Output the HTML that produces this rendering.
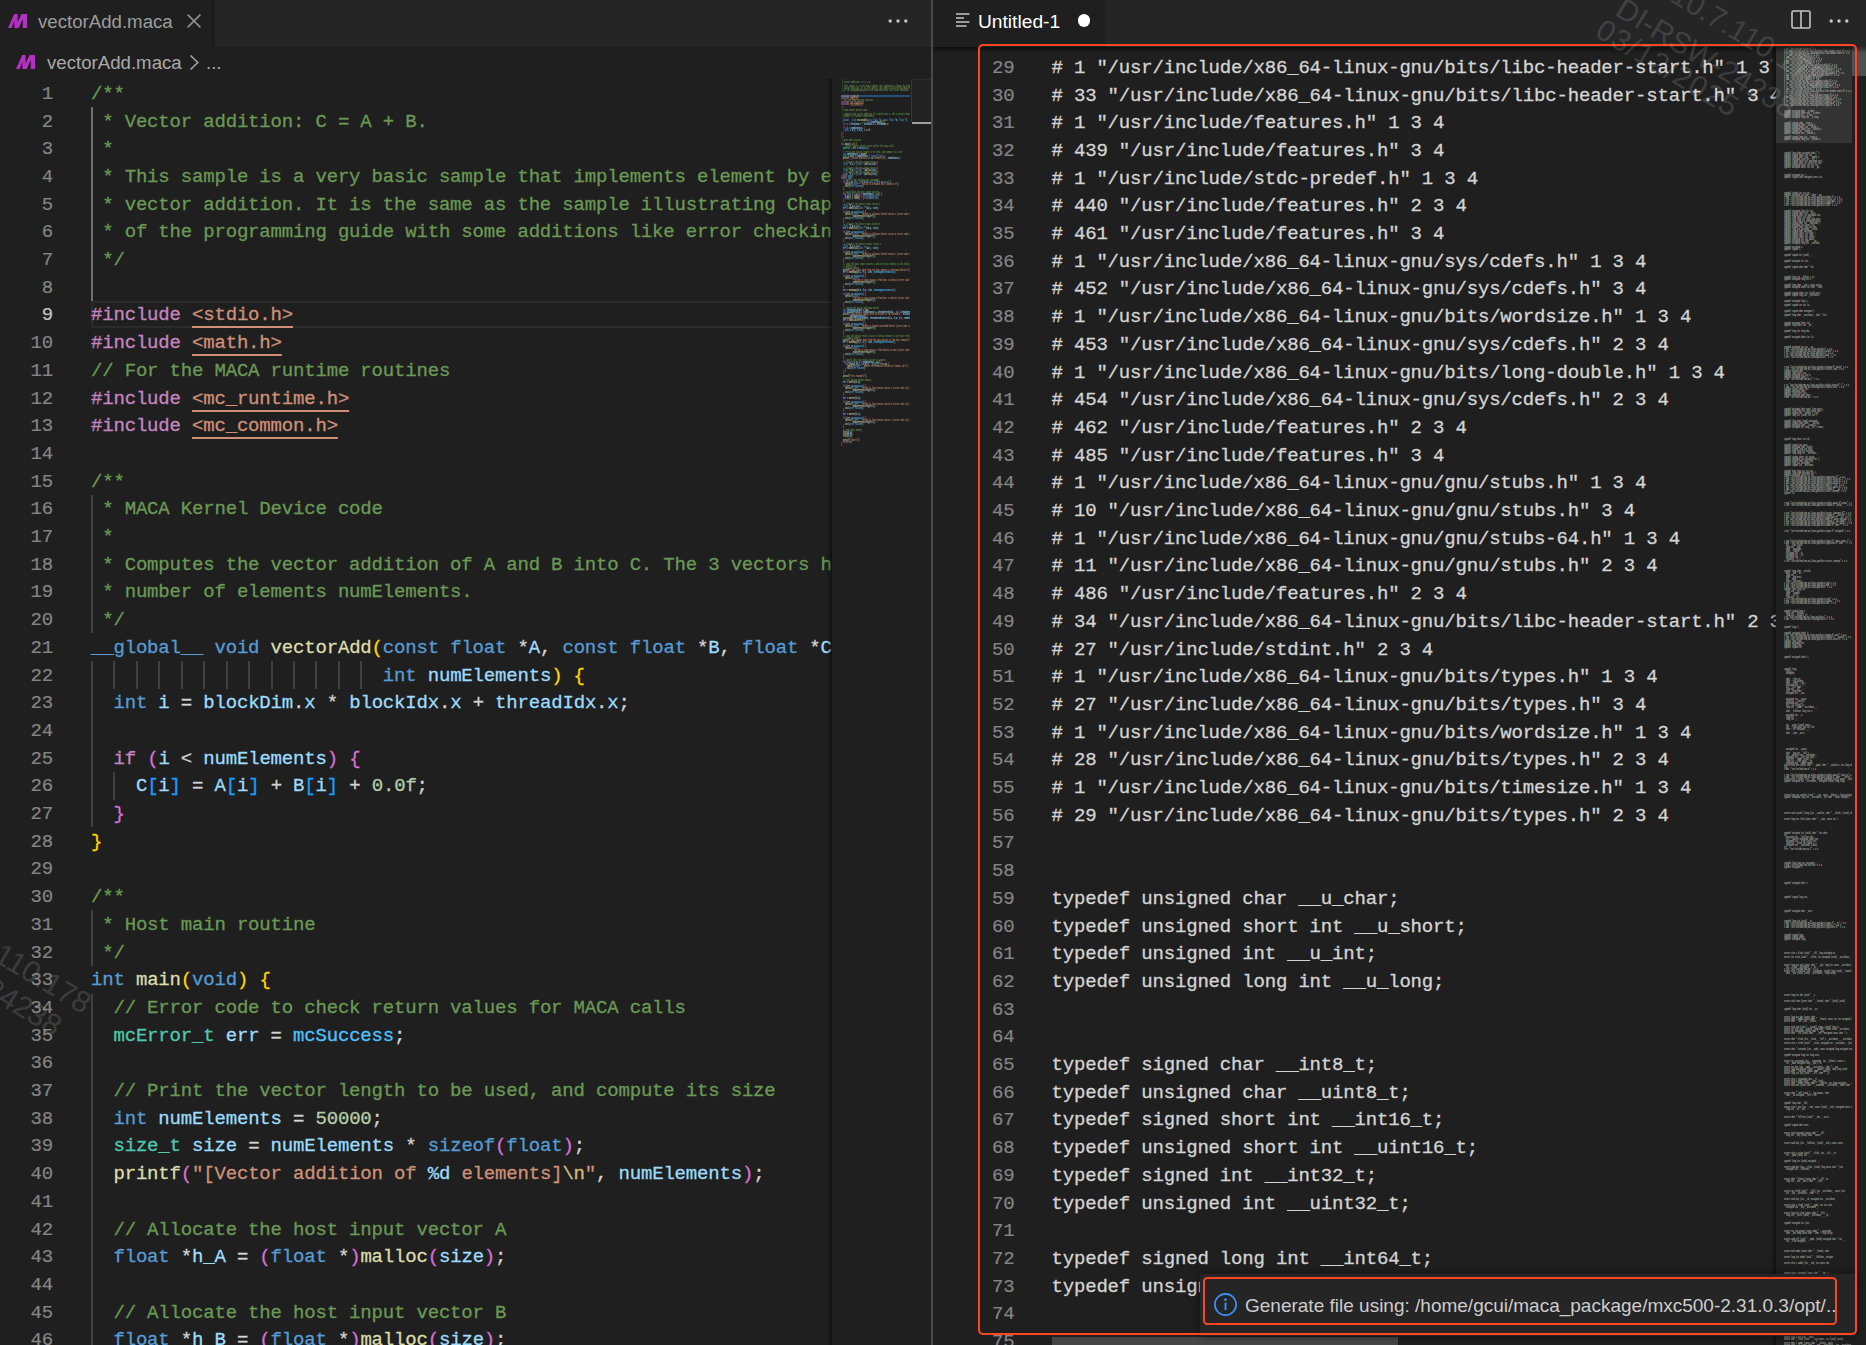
<!DOCTYPE html><html><head><meta charset="utf-8"><title>vscode</title><style>
*{box-sizing:border-box}
html,body{margin:0;padding:0}
body{width:1866px;height:1345px;overflow:hidden;background:#1f1f1f;position:relative;font-family:"Liberation Sans",sans-serif;color:#ccc}
.abs{position:absolute}
.pane{position:absolute;top:0;height:1345px;overflow:hidden;background:#1f1f1f}
.tabbar{position:absolute;left:0;top:0;right:0;height:47px;background:#252526}
.tab{position:absolute;left:0;top:0;height:47px;background:#1f1f1f}
.mono{font-family:"Liberation Mono",monospace;font-size:19.0px;letter-spacing:-0.180px;white-space:pre}
.ln{position:absolute;height:28px;line-height:28px;text-align:right;color:#858585;-webkit-text-stroke:0.2px}
.cl{position:absolute;height:28px;line-height:28px;color:#d4d4d4;-webkit-text-stroke:0.3px}
.c{color:#6a9955}.k{color:#569cd6}.p{color:#c586c0}.s{color:#ce9178}.su{color:#ce9178;text-decoration:underline;text-decoration-thickness:1.7px;text-underline-offset:5.6px}
.v{color:#9cdcfe}.f{color:#dcdcaa}.t{color:#4ec9b0}.n{color:#b5cea8}.o{color:#4fc1ff}.e{color:#d7ba7d}
.b1{color:#ffd700}.b2{color:#da70d6}.b3{color:#179fff}
.g{position:absolute;width:2px;background:#404040}
.mm{position:absolute;transform-origin:0 0;line-height:14.0px;font-weight:bold}
.mm div{height:14.0px;white-space:pre}
</style></head><body>
<div class="pane" id="lp" style="left:0;width:931px">
<div class="tabbar"></div><div class="tab" style="width:215px;border-right:4px solid #1c1c1d"></div>
<svg class="abs" style="left:7.8px;top:14px" width="19" height="14" viewBox="0 0 19 14"><path d="M0 14 L6.2 0 L9.6 0 L9.6 8.2 L13.6 0 L19 0 L19 14 L14.8 14 L14.8 5 L10.6 14 L6.4 14 L6.4 7 L3.6 14 Z" fill="#b62fc4"/></svg>
<div class="abs" style="left:38px;top:8px;height:28px;line-height:28px;font-size:18.65px;color:#9d9d9d;white-space:pre">vectorAdd.maca</div>
<svg class="abs" style="left:186px;top:13px" width="16" height="16" viewBox="0 0 16 16"><path d="M1.6 1.6 L14.4 14.4 M14.4 1.6 L1.6 14.4" stroke="#8f8f8f" stroke-width="1.6" fill="none"/></svg>
<svg class="abs" style="left:888px;top:17.5px" width="20" height="6" viewBox="0 0 20 6"><circle cx="2.2" cy="3" r="1.7" fill="#c5c5c5"/><circle cx="10" cy="3" r="1.7" fill="#c5c5c5"/><circle cx="17.8" cy="3" r="1.7" fill="#c5c5c5"/></svg>
<svg class="abs" style="left:16.2px;top:55px" width="19" height="14" viewBox="0 0 19 14"><path d="M0 14 L6.2 0 L9.6 0 L9.6 8.2 L13.6 0 L19 0 L19 14 L14.8 14 L14.8 5 L10.6 14 L6.4 14 L6.4 7 L3.6 14 Z" fill="#b62fc4"/></svg>
<div class="abs" style="left:47px;top:49px;height:28px;line-height:28px;font-size:18.65px;color:#a9a9a9;white-space:pre">vectorAdd.maca</div>
<svg class="abs" style="left:188px;top:54px" width="12" height="17" viewBox="0 0 12 17"><path d="M2.5 1.5 L9.8 8.5 L2.5 15.5" stroke="#a9a9a9" stroke-width="1.5" fill="none"/></svg>
<div class="abs" style="left:206px;top:49px;height:28px;line-height:28px;font-size:18.65px;color:#a9a9a9;white-space:pre">...</div>
<div class="abs" style="left:0;top:78px;width:832px;height:1267px;overflow:hidden">
<div class="abs" style="left:91px;top:223.00px;width:760px;height:26.7px;border:2px solid #2b2b2b"></div>
<div class="g" style="left:91px;top:29.10px;height:193.90px;background:#707070"></div>
<div class="g" style="left:91px;top:416.90px;height:138.50px;background:#404040"></div>
<div class="g" style="left:91px;top:583.10px;height:166.20px;background:#404040"></div>
<div class="g" style="left:113.4px;top:583.10px;height:27.70px;background:#404040"></div>
<div class="g" style="left:135.9px;top:583.10px;height:27.70px;background:#404040"></div>
<div class="g" style="left:158.3px;top:583.10px;height:27.70px;background:#404040"></div>
<div class="g" style="left:180.8px;top:583.10px;height:27.70px;background:#404040"></div>
<div class="g" style="left:203.2px;top:583.10px;height:27.70px;background:#404040"></div>
<div class="g" style="left:225.6px;top:583.10px;height:27.70px;background:#404040"></div>
<div class="g" style="left:248.1px;top:583.10px;height:27.70px;background:#404040"></div>
<div class="g" style="left:270.5px;top:583.10px;height:27.70px;background:#404040"></div>
<div class="g" style="left:293.0px;top:583.10px;height:27.70px;background:#404040"></div>
<div class="g" style="left:315.4px;top:583.10px;height:27.70px;background:#404040"></div>
<div class="g" style="left:337.8px;top:583.10px;height:27.70px;background:#404040"></div>
<div class="g" style="left:360.3px;top:583.10px;height:27.70px;background:#404040"></div>
<div class="g" style="left:113.4px;top:693.90px;height:27.70px;background:#404040"></div>
<div class="g" style="left:91px;top:832.40px;height:55.40px;background:#404040"></div>
<div class="g" style="left:91px;top:915.50px;height:387.80px;background:#404040"></div>
<div class="ln mono" style="left:0;width:53px;top:2px;color:#858585">1</div>
<div class="cl mono" style="left:91px;top:2px"><span class="c">/**</span></div>
<div class="ln mono" style="left:0;width:53px;top:30px;color:#858585">2</div>
<div class="cl mono" style="left:91px;top:30px"><span class="c"> * Vector addition: C = A + B.</span></div>
<div class="ln mono" style="left:0;width:53px;top:57px;color:#858585">3</div>
<div class="cl mono" style="left:91px;top:57px"><span class="c"> *</span></div>
<div class="ln mono" style="left:0;width:53px;top:85px;color:#858585">4</div>
<div class="cl mono" style="left:91px;top:85px"><span class="c"> * This sample is a very basic sample that implements element by element</span></div>
<div class="ln mono" style="left:0;width:53px;top:113px;color:#858585">5</div>
<div class="cl mono" style="left:91px;top:113px"><span class="c"> * vector addition. It is the same as the sample illustrating Chapter 2</span></div>
<div class="ln mono" style="left:0;width:53px;top:140px;color:#858585">6</div>
<div class="cl mono" style="left:91px;top:140px"><span class="c"> * of the programming guide with some additions like error checking.</span></div>
<div class="ln mono" style="left:0;width:53px;top:168px;color:#858585">7</div>
<div class="cl mono" style="left:91px;top:168px"><span class="c"> */</span></div>
<div class="ln mono" style="left:0;width:53px;top:196px;color:#858585">8</div>
<div class="ln mono" style="left:0;width:53px;top:223px;color:#c6c6c6">9</div>
<div class="cl mono" style="left:91px;top:223px"><span class="p">#include</span> <span class="su">&lt;stdio.h&gt;</span></div>
<div class="ln mono" style="left:0;width:53px;top:251px;color:#858585">10</div>
<div class="cl mono" style="left:91px;top:251px"><span class="p">#include</span> <span class="su">&lt;math.h&gt;</span></div>
<div class="ln mono" style="left:0;width:53px;top:279px;color:#858585">11</div>
<div class="cl mono" style="left:91px;top:279px"><span class="c">// For the MACA runtime routines</span></div>
<div class="ln mono" style="left:0;width:53px;top:307px;color:#858585">12</div>
<div class="cl mono" style="left:91px;top:307px"><span class="p">#include</span> <span class="su">&lt;mc_runtime.h&gt;</span></div>
<div class="ln mono" style="left:0;width:53px;top:334px;color:#858585">13</div>
<div class="cl mono" style="left:91px;top:334px"><span class="p">#include</span> <span class="su">&lt;mc_common.h&gt;</span></div>
<div class="ln mono" style="left:0;width:53px;top:362px;color:#858585">14</div>
<div class="ln mono" style="left:0;width:53px;top:390px;color:#858585">15</div>
<div class="cl mono" style="left:91px;top:390px"><span class="c">/**</span></div>
<div class="ln mono" style="left:0;width:53px;top:417px;color:#858585">16</div>
<div class="cl mono" style="left:91px;top:417px"><span class="c"> * MACA Kernel Device code</span></div>
<div class="ln mono" style="left:0;width:53px;top:445px;color:#858585">17</div>
<div class="cl mono" style="left:91px;top:445px"><span class="c"> *</span></div>
<div class="ln mono" style="left:0;width:53px;top:473px;color:#858585">18</div>
<div class="cl mono" style="left:91px;top:473px"><span class="c"> * Computes the vector addition of A and B into C. The 3 vectors have the same</span></div>
<div class="ln mono" style="left:0;width:53px;top:500px;color:#858585">19</div>
<div class="cl mono" style="left:91px;top:500px"><span class="c"> * number of elements numElements.</span></div>
<div class="ln mono" style="left:0;width:53px;top:528px;color:#858585">20</div>
<div class="cl mono" style="left:91px;top:528px"><span class="c"> */</span></div>
<div class="ln mono" style="left:0;width:53px;top:556px;color:#858585">21</div>
<div class="cl mono" style="left:91px;top:556px"><span class="k">__global__</span> <span class="k">void</span> <span class="f">vectorAdd</span><span class="b1">(</span><span class="k">const</span> <span class="k">float</span> *<span class="v">A</span>, <span class="k">const</span> <span class="k">float</span> *<span class="v">B</span>, <span class="k">float</span> *<span class="v">C</span>,</div>
<div class="ln mono" style="left:0;width:53px;top:584px;color:#858585">22</div>
<div class="cl mono" style="left:91px;top:584px">                          <span class="k">int</span> <span class="v">numElements</span><span class="b1">)</span> <span class="b1">{</span></div>
<div class="ln mono" style="left:0;width:53px;top:611px;color:#858585">23</div>
<div class="cl mono" style="left:91px;top:611px">  <span class="k">int</span> <span class="v">i</span> = <span class="v">blockDim</span>.<span class="v">x</span> * <span class="v">blockIdx</span>.<span class="v">x</span> + <span class="v">threadIdx</span>.<span class="v">x</span>;</div>
<div class="ln mono" style="left:0;width:53px;top:639px;color:#858585">24</div>
<div class="ln mono" style="left:0;width:53px;top:667px;color:#858585">25</div>
<div class="cl mono" style="left:91px;top:667px">  <span class="p">if</span> <span class="b2">(</span><span class="v">i</span> &lt; <span class="v">numElements</span><span class="b2">)</span> <span class="b2">{</span></div>
<div class="ln mono" style="left:0;width:53px;top:694px;color:#858585">26</div>
<div class="cl mono" style="left:91px;top:694px">    <span class="v">C</span><span class="b3">[</span><span class="v">i</span><span class="b3">]</span> = <span class="v">A</span><span class="b3">[</span><span class="v">i</span><span class="b3">]</span> + <span class="v">B</span><span class="b3">[</span><span class="v">i</span><span class="b3">]</span> + <span class="n">0.0f</span>;</div>
<div class="ln mono" style="left:0;width:53px;top:722px;color:#858585">27</div>
<div class="cl mono" style="left:91px;top:722px">  <span class="b2">}</span></div>
<div class="ln mono" style="left:0;width:53px;top:750px;color:#858585">28</div>
<div class="cl mono" style="left:91px;top:750px"><span class="b1">}</span></div>
<div class="ln mono" style="left:0;width:53px;top:777px;color:#858585">29</div>
<div class="ln mono" style="left:0;width:53px;top:805px;color:#858585">30</div>
<div class="cl mono" style="left:91px;top:805px"><span class="c">/**</span></div>
<div class="ln mono" style="left:0;width:53px;top:833px;color:#858585">31</div>
<div class="cl mono" style="left:91px;top:833px"><span class="c"> * Host main routine</span></div>
<div class="ln mono" style="left:0;width:53px;top:861px;color:#858585">32</div>
<div class="cl mono" style="left:91px;top:861px"><span class="c"> */</span></div>
<div class="ln mono" style="left:0;width:53px;top:888px;color:#858585">33</div>
<div class="cl mono" style="left:91px;top:888px"><span class="k">int</span> <span class="f">main</span><span class="b1">(</span><span class="k">void</span><span class="b1">)</span> <span class="b1">{</span></div>
<div class="ln mono" style="left:0;width:53px;top:916px;color:#858585">34</div>
<div class="cl mono" style="left:91px;top:916px">  <span class="c">// Error code to check return values for MACA calls</span></div>
<div class="ln mono" style="left:0;width:53px;top:944px;color:#858585">35</div>
<div class="cl mono" style="left:91px;top:944px">  <span class="t">mcError_t</span> <span class="v">err</span> = <span class="o">mcSuccess</span>;</div>
<div class="ln mono" style="left:0;width:53px;top:971px;color:#858585">36</div>
<div class="ln mono" style="left:0;width:53px;top:999px;color:#858585">37</div>
<div class="cl mono" style="left:91px;top:999px">  <span class="c">// Print the vector length to be used, and compute its size</span></div>
<div class="ln mono" style="left:0;width:53px;top:1027px;color:#858585">38</div>
<div class="cl mono" style="left:91px;top:1027px">  <span class="k">int</span> <span class="v">numElements</span> = <span class="n">50000</span>;</div>
<div class="ln mono" style="left:0;width:53px;top:1054px;color:#858585">39</div>
<div class="cl mono" style="left:91px;top:1054px">  <span class="t">size_t</span> <span class="v">size</span> = <span class="v">numElements</span> * <span class="k">sizeof</span><span class="b2">(</span><span class="k">float</span><span class="b2">)</span>;</div>
<div class="ln mono" style="left:0;width:53px;top:1082px;color:#858585">40</div>
<div class="cl mono" style="left:91px;top:1082px">  <span class="f">printf</span><span class="b2">(</span><span class="s">"[Vector addition of </span><span class="v">%d</span><span class="s"> elements]</span><span class="e">\n</span><span class="s">"</span>, <span class="v">numElements</span><span class="b2">)</span>;</div>
<div class="ln mono" style="left:0;width:53px;top:1110px;color:#858585">41</div>
<div class="ln mono" style="left:0;width:53px;top:1138px;color:#858585">42</div>
<div class="cl mono" style="left:91px;top:1138px">  <span class="c">// Allocate the host input vector A</span></div>
<div class="ln mono" style="left:0;width:53px;top:1165px;color:#858585">43</div>
<div class="cl mono" style="left:91px;top:1165px">  <span class="k">float</span> *<span class="v">h_A</span> = <span class="b2">(</span><span class="k">float</span> *<span class="b2">)</span><span class="f">malloc</span><span class="b2">(</span><span class="v">size</span><span class="b2">)</span>;</div>
<div class="ln mono" style="left:0;width:53px;top:1193px;color:#858585">44</div>
<div class="ln mono" style="left:0;width:53px;top:1221px;color:#858585">45</div>
<div class="cl mono" style="left:91px;top:1221px">  <span class="c">// Allocate the host input vector B</span></div>
<div class="ln mono" style="left:0;width:53px;top:1248px;color:#858585">46</div>
<div class="cl mono" style="left:91px;top:1248px">  <span class="k">float</span> *<span class="v">h_B</span> = <span class="b2">(</span><span class="k">float</span> *<span class="b2">)</span><span class="f">malloc</span><span class="b2">(</span><span class="v">size</span><span class="b2">)</span>;</div>
<div class="abs" style="left:826px;top:1px;width:6px;height:1267px;background:linear-gradient(90deg,rgba(0,0,0,0),rgba(0,0,0,.45))"></div>
</div>
<div class="abs" id="lmm" style="left:832px;top:79px;width:99px;height:1266px;overflow:hidden">
<div class="abs" style="left:9px;top:16px;width:69px;height:2px;background:#264f78"></div>
<div class="abs" style="left:9px;top:0;width:69px;height:400px;overflow:hidden"><div class="mm mono" style="left:0;top:-1.7px;transform:scale(0.08913,0.14286);opacity:.95">
<div><span class="c">/**</span></div><div><span class="c"> * Vector addition: C = A + B.</span></div><div><span class="c"> *</span></div><div><span class="c"> * This sample is a very basic sample that implements element by element</span></div><div><span class="c"> * vector addition. It is the same as the sample illustrating Chapter 2</span></div><div><span class="c"> * of the programming guide with some additions like error checking.</span></div><div><span class="c"> */</span></div><div> </div><div><span class="p">#include</span> <span class="su">&lt;stdio.h&gt;</span></div><div><span class="p">#include</span> <span class="su">&lt;math.h&gt;</span></div><div><span class="c">// For the MACA runtime routines</span></div><div><span class="p">#include</span> <span class="su">&lt;mc_runtime.h&gt;</span></div><div><span class="p">#include</span> <span class="su">&lt;mc_common.h&gt;</span></div><div> </div><div><span class="c">/**</span></div><div><span class="c"> * MACA Kernel Device code</span></div><div><span class="c"> *</span></div><div><span class="c"> * Computes the vector addition of A and B into C. The 3 vectors have the same</span></div><div><span class="c"> * number of elements numElements.</span></div><div><span class="c"> */</span></div><div><span class="k">__global__</span> <span class="k">void</span> <span class="f">vectorAdd</span><span class="b1">(</span><span class="k">const</span> <span class="k">float</span> *<span class="v">A</span>, <span class="k">const</span> <span class="k">float</span> *<span class="v">B</span>, <span class="k">float</span> *<span class="v">C</span>,</div><div>                          <span class="k">int</span> <span class="v">numElements</span><span class="b1">)</span> <span class="b1">{</span></div><div>  <span class="k">int</span> <span class="v">i</span> = <span class="v">blockDim</span>.<span class="v">x</span> * <span class="v">blockIdx</span>.<span class="v">x</span> + <span class="v">threadIdx</span>.<span class="v">x</span>;</div><div> </div><div>  <span class="p">if</span> <span class="b2">(</span><span class="v">i</span> &lt; <span class="v">numElements</span><span class="b2">)</span> <span class="b2">{</span></div><div>    <span class="v">C</span><span class="b3">[</span><span class="v">i</span><span class="b3">]</span> = <span class="v">A</span><span class="b3">[</span><span class="v">i</span><span class="b3">]</span> + <span class="v">B</span><span class="b3">[</span><span class="v">i</span><span class="b3">]</span> + <span class="n">0.0f</span>;</div><div>  <span class="b2">}</span></div><div><span class="b1">}</span></div><div> </div><div><span class="c">/**</span></div><div><span class="c"> * Host main routine</span></div><div><span class="c"> */</span></div><div><span class="k">int</span> <span class="f">main</span><span class="b1">(</span><span class="k">void</span><span class="b1">)</span> <span class="b1">{</span></div><div>  <span class="c">// Error code to check return values for MACA calls</span></div><div>  <span class="t">mcError_t</span> <span class="v">err</span> = <span class="o">mcSuccess</span>;</div><div> </div><div>  <span class="c">// Print the vector length to be used, and compute its size</span></div><div>  <span class="k">int</span> <span class="v">numElements</span> = <span class="n">50000</span>;</div><div>  <span class="t">size_t</span> <span class="v">size</span> = <span class="v">numElements</span> * <span class="k">sizeof</span><span class="b2">(</span><span class="k">float</span><span class="b2">)</span>;</div><div>  <span class="f">printf</span><span class="b2">(</span><span class="s">"[Vector addition of </span><span class="v">%d</span><span class="s"> elements]</span><span class="e">\n</span><span class="s">"</span>, <span class="v">numElements</span><span class="b2">)</span>;</div><div> </div><div>  <span class="c">// Allocate the host input vector A</span></div><div>  <span class="k">float</span> *<span class="v">h_A</span> = <span class="b2">(</span><span class="k">float</span> *<span class="b2">)</span><span class="f">malloc</span><span class="b2">(</span><span class="v">size</span><span class="b2">)</span>;</div><div> </div><div>  <span class="c">// Allocate the host input vector B</span></div><div>  <span class="k">float</span> *<span class="v">h_B</span> = <span class="b2">(</span><span class="k">float</span> *<span class="b2">)</span><span class="f">malloc</span><span class="b2">(</span><span class="v">size</span><span class="b2">)</span>;</div><div>  <span class="c">// Allocate the host output vector C</span></div><div>  <span class="k">float</span> *<span class="v">h_C</span> = (<span class="k">float</span> *)<span class="f">malloc</span>(<span class="v">size</span>);</div><div><span class="p">#ifdef</span> <span class="k">DEBUG</span></div><div><span class="p">#endif</span> <span class="k">DEBU</span></div><div>  <span class="c">// Verify that allocations succeeded</span></div><div>  <span class="p">if</span> (<span class="v">h_A</span> == <span class="k">NULL</span> || <span class="v">h_B</span> == <span class="k">NULL</span> || <span class="v">h_C</span> == <span class="k">NULL</span>) {</div><div>    <span class="f">fprintf</span>(<span class="k">stderr</span>, <span class="s">"Failed to allocate host vectors!\n"</span>);</div><div>    <span class="f">exit</span>(<span class="k">EXIT_FAILURE</span>);</div><div>  }</div><div> </div><div>  <span class="c">// Initialize the host input vectors</span></div><div>  <span class="p">for</span> (<span class="k">int</span> <span class="v">i</span> = 0; <span class="v">i</span> &lt; <span class="v">numElements</span>; ++<span class="v">i</span>) {</div><div>    <span class="v">h_A</span>[<span class="v">i</span>] = <span class="f">rand</span>() / (<span class="k">float</span>)<span class="k">RAND_MAX</span>;</div><div>    <span class="v">h_B</span>[<span class="v">i</span>] = <span class="f">rand</span>() / (<span class="k">float</span>)<span class="k">RAND_MAX</span>;</div><div>  }</div><div> </div><div>  <span class="c">// Allocate the device input vector A</span></div><div>  <span class="k">float</span> *<span class="v">d_A</span> = <span class="k">NULL</span>;</div><div>  <span class="v">err</span> = <span class="f">mcMalloc</span>((<span class="k">void</span> **)&amp;<span class="v">d_A</span>, <span class="v">size</span>);</div><div> </div><div>  <span class="p">if</span> (<span class="v">err</span> != <span class="o">mcSuccess</span>) {</div><div>    <span class="f">fprintf</span>(<span class="k">stderr</span>, <span class="s">"Failed to allocate device vector A (error code %s)!\n"</span>,</div><div>            <span class="f">mcGetErrorString</span>(<span class="v">err</span>));</div><div>    <span class="f">exit</span>(<span class="k">EXIT_FAILURE</span>);</div><div>  }</div><div> </div><div>  <span class="c">// Allocate the device input vector B</span></div><div>  <span class="k">float</span> *<span class="v">d_B</span> = <span class="k">NULL</span>;</div><div>  <span class="v">err</span> = <span class="f">mcMalloc</span>((<span class="k">void</span> **)&amp;<span class="v">d_B</span>, <span class="v">size</span>);</div><div> </div><div>  <span class="p">if</span> (<span class="v">err</span> != <span class="o">mcSuccess</span>) {</div><div>    <span class="f">fprintf</span>(<span class="k">stderr</span>, <span class="s">"Failed to allocate device vector B (error code %s)!\n"</span>,</div><div>            <span class="f">mcGetErrorString</span>(<span class="v">err</span>));</div><div>    <span class="f">exit</span>(<span class="k">EXIT_FAILURE</span>);</div><div>  }</div><div> </div><div>  <span class="c">// Allocate the device output vector C</span></div><div>  <span class="k">float</span> *<span class="v">d_C</span> = <span class="k">NULL</span>;</div><div>  <span class="v">err</span> = <span class="f">mcMalloc</span>((<span class="k">void</span> **)&amp;<span class="v">d_C</span>, <span class="v">size</span>);</div><div> </div><div>  <span class="p">if</span> (<span class="v">err</span> != <span class="o">mcSuccess</span>) {</div><div>    <span class="f">fprintf</span>(<span class="k">stderr</span>, <span class="s">"Failed to allocate device vector C (error code %s)!\n"</span>,</div><div>            <span class="f">mcGetErrorString</span>(<span class="v">err</span>));</div><div>    <span class="f">exit</span>(<span class="k">EXIT_FAILURE</span>);</div><div>  }</div><div> </div><div>  <span class="c">// Copy the host input vectors A and B in host memory to the device input</span></div><div>  <span class="c">// vectors in</span></div><div>  <span class="c">// device memory</span></div><div>  <span class="f">printf</span>(<span class="s">"Copy input data from the host memory to the MACA device\n"</span>);</div><div>  <span class="v">err</span> = <span class="f">mcMemcpy</span>(<span class="v">d_A</span>, <span class="v">h_A</span>, <span class="v">size</span>, <span class="o">mcMemcpyHostToDevice</span>);</div><div> </div><div>  <span class="p">if</span> (<span class="v">err</span> != <span class="o">mcSuccess</span>) {</div><div>    <span class="f">fprintf</span>(<span class="k">stderr</span>,</div><div>            <span class="s">"Failed to copy vector A from host to device (error code %s)!\n"</span>,</div><div>            <span class="f">mcGetErrorString</span>(<span class="v">err</span>));</div><div>    <span class="f">exit</span>(<span class="k">EXIT_FAILURE</span>);</div><div>  }</div><div> </div><div>  <span class="v">err</span> = <span class="f">mcMemcpy</span>(<span class="v">d_B</span>, <span class="v">h_B</span>, <span class="v">size</span>, <span class="o">mcMemcpyHostToDevice</span>);</div><div> </div><div>  <span class="p">if</span> (<span class="v">err</span> != <span class="o">mcSuccess</span>) {</div><div>    <span class="f">fprintf</span>(<span class="k">stderr</span>,</div><div>            <span class="s">"Failed to copy vector B from host to device (error code %s)!\n"</span>,</div><div>            <span class="f">mcGetErrorString</span>(<span class="v">err</span>));</div><div>    <span class="f">exit</span>(<span class="k">EXIT_FAILURE</span>);</div><div>  }</div><div> </div><div>  <span class="c">// Launch the Vector Add MACA Kernel</span></div><div>  <span class="k">int</span> <span class="v">threadsPerBlock</span> = 256;</div><div>  <span class="k">int</span> <span class="v">blocksPerGrid</span> = (<span class="v">numElements</span> + <span class="v">threadsPerBlock</span> - 1) / <span class="v">threadsPerBlock</span>;</div><div>  <span class="f">printf</span>(<span class="s">"MACA kernel launch with %d blocks of %d threads\n"</span>, <span class="v">blocksPerGrid</span>,</div><div>         <span class="v">threadsPerBlock</span>);</div><div>  <span class="f">vectorAdd</span>&lt;&lt;&lt;<span class="v">blocksPerGrid</span>, <span class="v">threadsPerBlock</span>&gt;&gt;&gt;(<span class="v">d_A</span>, <span class="v">d_B</span>, <span class="v">d_C</span>, <span class="v">numElements</span>);</div><div>  <span class="v">err</span> = <span class="f">mcGetLastError</span>();</div><div> </div><div>  <span class="p">if</span> (<span class="v">err</span> != <span class="o">mcSuccess</span>) {</div><div>    <span class="f">fprintf</span>(<span class="k">stderr</span>, <span class="s">"Failed to launch vectorAdd kernel (error code %s)!\n"</span>,</div><div>            <span class="f">mcGetErrorString</span>(<span class="v">err</span>));</div><div>    <span class="f">exit</span>(<span class="k">EXIT_FAILURE</span>);</div><div>  }</div><div> </div><div>  <span class="c">// Copy the device result vector in device memory to the host result vector</span></div><div>  <span class="c">// in host memory.</span></div><div>  <span class="f">printf</span>(<span class="s">"Copy output data from the MACA device to the host memory\n"</span>);</div><div>  <span class="v">err</span> = <span class="f">mcMemcpy</span>(<span class="v">h_C</span>, <span class="v">d_C</span>, <span class="v">size</span>, <span class="o">mcMemcpyDeviceToHost</span>);</div><div> </div><div>  <span class="p">if</span> (<span class="v">err</span> != <span class="o">mcSuccess</span>) {</div><div>    <span class="f">fprintf</span>(<span class="k">stderr</span>,</div><div>            <span class="s">"Failed to copy vector C from device to host (error code %s)!\n"</span>,</div><div>            <span class="f">mcGetErrorString</span>(<span class="v">err</span>));</div><div>    <span class="f">exit</span>(<span class="k">EXIT_FAILURE</span>);</div><div>  }</div><div> </div><div>  <span class="c">// Verify that the result vector is correct</span></div><div>  <span class="p">for</span> (<span class="k">int</span> <span class="v">i</span> = 0; <span class="v">i</span> &lt; <span class="v">numElements</span>; ++<span class="v">i</span>) {</div><div>    <span class="p">if</span> (<span class="f">fabs</span>(<span class="v">h_A</span>[<span class="v">i</span>] + <span class="v">h_B</span>[<span class="v">i</span>] - <span class="v">h_C</span>[<span class="v">i</span>]) &gt; 1e-5) {</div><div>      <span class="f">fprintf</span>(<span class="k">stderr</span>, <span class="s">"Result verification failed at element %d!\n"</span>, <span class="v">i</span>);</div><div>      <span class="f">exit</span>(<span class="k">EXIT_FAILURE</span>);</div><div>    }</div><div>  }</div><div> </div><div>  <span class="f">printf</span>(<span class="s">"Test PASSED\n"</span>);</div><div> </div><div>  <span class="c">// Free device global memory</span></div><div>  <span class="v">err</span> = <span class="f">mcFree</span>(<span class="v">d_A</span>);</div><div> </div><div>  <span class="p">if</span> (<span class="v">err</span> != <span class="o">mcSuccess</span>) {</div><div>    <span class="f">fprintf</span>(<span class="k">stderr</span>, <span class="s">"Failed to free device vector A (error code %s)!\n"</span>,</div><div>            <span class="f">mcGetErrorString</span>(<span class="v">err</span>));</div><div>    <span class="f">exit</span>(<span class="k">EXIT_FAILURE</span>);</div><div>  }</div><div> </div><div>  <span class="v">err</span> = <span class="f">mcFree</span>(<span class="v">d_B</span>);</div><div> </div><div>  <span class="p">if</span> (<span class="v">err</span> != <span class="o">mcSuccess</span>) {</div><div>    <span class="f">fprintf</span>(<span class="k">stderr</span>, <span class="s">"Failed to free device vector B (error code %s)!\n"</span>,</div><div>            <span class="f">mcGetErrorString</span>(<span class="v">err</span>));</div><div>    <span class="f">exit</span>(<span class="k">EXIT_FAILURE</span>);</div><div>  }</div><div> </div><div>  <span class="v">err</span> = <span class="f">mcFree</span>(<span class="v">d_C</span>);</div><div> </div><div>  <span class="p">if</span> (<span class="v">err</span> != <span class="o">mcSuccess</span>) {</div><div>    <span class="f">fprintf</span>(<span class="k">stderr</span>, <span class="s">"Failed to free device vector C (error code %s)!\n"</span>,</div><div>            <span class="f">mcGetErrorString</span>(<span class="v">err</span>));</div><div>    <span class="f">exit</span>(<span class="k">EXIT_FAILURE</span>);</div><div>  }</div><div> </div><div>  <span class="c">// Free host memory</span></div><div>  <span class="f">free</span>(<span class="v">h_A</span>);</div><div>  <span class="f">free</span>(<span class="v">h_B</span>);</div><div>  <span class="f">free</span>(<span class="v">h_C</span>);</div><div> </div><div>  <span class="f">printf</span>(<span class="s">"Done\n"</span>);</div><div>  <span class="p">return</span> 0;</div><div>}</div>
</div></div>
<div class="abs" style="left:79px;top:0;width:20px;height:43px;background:rgba(121,121,121,.05);border-left:1px solid #363636;border-top:1px solid #2c2c2c"></div>
<div class="abs" style="left:80px;top:43px;width:19px;height:2px;background:#a0a0a0"></div>
</div>
</div>
<div class="abs" style="left:931px;top:0;width:2px;height:1345px;background:#4a4a4a"></div>
<div class="pane" id="rp" style="left:933px;width:933px">
<div class="tabbar"></div><div class="tab" style="width:172.5px"></div>
<svg class="abs" style="left:23px;top:13px" width="14" height="14" viewBox="0 0 14 14"><path d="M0 1 H13.5 M0 5 H8 M0 9 H13.5 M0 13 H10.5" stroke="#c5c5c5" stroke-width="1.4" fill="none"/></svg>
<div class="abs" style="left:45px;top:8px;height:28px;line-height:28px;font-size:19.2px;color:#fff;white-space:pre">Untitled-1</div>
<div class="abs" style="left:144.7px;top:14.4px;width:12.6px;height:12.6px;border-radius:50%;background:#fff"></div>
<svg class="abs" style="left:858px;top:10px" width="20" height="19" viewBox="0 0 20 19"><rect x="1" y="1" width="18" height="17" rx="1.5" fill="none" stroke="#c5c5c5" stroke-width="1.6"/><path d="M10 1 V18" stroke="#c5c5c5" stroke-width="1.6"/></svg>
<svg class="abs" style="left:896px;top:17.5px" width="20" height="6" viewBox="0 0 20 6"><circle cx="2.2" cy="3" r="1.7" fill="#c5c5c5"/><circle cx="10" cy="3" r="1.7" fill="#c5c5c5"/><circle cx="17.8" cy="3" r="1.7" fill="#c5c5c5"/></svg>
<div class="abs" style="left:0;top:47px;width:843px;height:1298px;overflow:hidden">
<div class="ln mono" style="left:0;width:81.5px;top:7px">29</div>
<div class="cl mono" style="left:118.5px;top:7px"># 1 "/usr/include/x86_64-linux-gnu/bits/libc-header-start.h" 1 3 4</div>
<div class="ln mono" style="left:0;width:81.5px;top:35px">30</div>
<div class="cl mono" style="left:118.5px;top:35px"># 33 "/usr/include/x86_64-linux-gnu/bits/libc-header-start.h" 3 4</div>
<div class="ln mono" style="left:0;width:81.5px;top:62px">31</div>
<div class="cl mono" style="left:118.5px;top:62px"># 1 "/usr/include/features.h" 1 3 4</div>
<div class="ln mono" style="left:0;width:81.5px;top:90px">32</div>
<div class="cl mono" style="left:118.5px;top:90px"># 439 "/usr/include/features.h" 3 4</div>
<div class="ln mono" style="left:0;width:81.5px;top:118px">33</div>
<div class="cl mono" style="left:118.5px;top:118px"># 1 "/usr/include/stdc-predef.h" 1 3 4</div>
<div class="ln mono" style="left:0;width:81.5px;top:145px">34</div>
<div class="cl mono" style="left:118.5px;top:145px"># 440 "/usr/include/features.h" 2 3 4</div>
<div class="ln mono" style="left:0;width:81.5px;top:173px">35</div>
<div class="cl mono" style="left:118.5px;top:173px"># 461 "/usr/include/features.h" 3 4</div>
<div class="ln mono" style="left:0;width:81.5px;top:201px">36</div>
<div class="cl mono" style="left:118.5px;top:201px"># 1 "/usr/include/x86_64-linux-gnu/sys/cdefs.h" 1 3 4</div>
<div class="ln mono" style="left:0;width:81.5px;top:228px">37</div>
<div class="cl mono" style="left:118.5px;top:228px"># 452 "/usr/include/x86_64-linux-gnu/sys/cdefs.h" 3 4</div>
<div class="ln mono" style="left:0;width:81.5px;top:256px">38</div>
<div class="cl mono" style="left:118.5px;top:256px"># 1 "/usr/include/x86_64-linux-gnu/bits/wordsize.h" 1 3 4</div>
<div class="ln mono" style="left:0;width:81.5px;top:284px">39</div>
<div class="cl mono" style="left:118.5px;top:284px"># 453 "/usr/include/x86_64-linux-gnu/sys/cdefs.h" 2 3 4</div>
<div class="ln mono" style="left:0;width:81.5px;top:312px">40</div>
<div class="cl mono" style="left:118.5px;top:312px"># 1 "/usr/include/x86_64-linux-gnu/bits/long-double.h" 1 3 4</div>
<div class="ln mono" style="left:0;width:81.5px;top:339px">41</div>
<div class="cl mono" style="left:118.5px;top:339px"># 454 "/usr/include/x86_64-linux-gnu/sys/cdefs.h" 2 3 4</div>
<div class="ln mono" style="left:0;width:81.5px;top:367px">42</div>
<div class="cl mono" style="left:118.5px;top:367px"># 462 "/usr/include/features.h" 2 3 4</div>
<div class="ln mono" style="left:0;width:81.5px;top:395px">43</div>
<div class="cl mono" style="left:118.5px;top:395px"># 485 "/usr/include/features.h" 3 4</div>
<div class="ln mono" style="left:0;width:81.5px;top:422px">44</div>
<div class="cl mono" style="left:118.5px;top:422px"># 1 "/usr/include/x86_64-linux-gnu/gnu/stubs.h" 1 3 4</div>
<div class="ln mono" style="left:0;width:81.5px;top:450px">45</div>
<div class="cl mono" style="left:118.5px;top:450px"># 10 "/usr/include/x86_64-linux-gnu/gnu/stubs.h" 3 4</div>
<div class="ln mono" style="left:0;width:81.5px;top:478px">46</div>
<div class="cl mono" style="left:118.5px;top:478px"># 1 "/usr/include/x86_64-linux-gnu/gnu/stubs-64.h" 1 3 4</div>
<div class="ln mono" style="left:0;width:81.5px;top:505px">47</div>
<div class="cl mono" style="left:118.5px;top:505px"># 11 "/usr/include/x86_64-linux-gnu/gnu/stubs.h" 2 3 4</div>
<div class="ln mono" style="left:0;width:81.5px;top:533px">48</div>
<div class="cl mono" style="left:118.5px;top:533px"># 486 "/usr/include/features.h" 2 3 4</div>
<div class="ln mono" style="left:0;width:81.5px;top:561px">49</div>
<div class="cl mono" style="left:118.5px;top:561px"># 34 "/usr/include/x86_64-linux-gnu/bits/libc-header-start.h" 2 3 4</div>
<div class="ln mono" style="left:0;width:81.5px;top:589px">50</div>
<div class="cl mono" style="left:118.5px;top:589px"># 27 "/usr/include/stdint.h" 2 3 4</div>
<div class="ln mono" style="left:0;width:81.5px;top:616px">51</div>
<div class="cl mono" style="left:118.5px;top:616px"># 1 "/usr/include/x86_64-linux-gnu/bits/types.h" 1 3 4</div>
<div class="ln mono" style="left:0;width:81.5px;top:644px">52</div>
<div class="cl mono" style="left:118.5px;top:644px"># 27 "/usr/include/x86_64-linux-gnu/bits/types.h" 3 4</div>
<div class="ln mono" style="left:0;width:81.5px;top:672px">53</div>
<div class="cl mono" style="left:118.5px;top:672px"># 1 "/usr/include/x86_64-linux-gnu/bits/wordsize.h" 1 3 4</div>
<div class="ln mono" style="left:0;width:81.5px;top:699px">54</div>
<div class="cl mono" style="left:118.5px;top:699px"># 28 "/usr/include/x86_64-linux-gnu/bits/types.h" 2 3 4</div>
<div class="ln mono" style="left:0;width:81.5px;top:727px">55</div>
<div class="cl mono" style="left:118.5px;top:727px"># 1 "/usr/include/x86_64-linux-gnu/bits/timesize.h" 1 3 4</div>
<div class="ln mono" style="left:0;width:81.5px;top:755px">56</div>
<div class="cl mono" style="left:118.5px;top:755px"># 29 "/usr/include/x86_64-linux-gnu/bits/types.h" 2 3 4</div>
<div class="ln mono" style="left:0;width:81.5px;top:782px">57</div>
<div class="ln mono" style="left:0;width:81.5px;top:810px">58</div>
<div class="ln mono" style="left:0;width:81.5px;top:838px">59</div>
<div class="cl mono" style="left:118.5px;top:838px">typedef unsigned char __u_char;</div>
<div class="ln mono" style="left:0;width:81.5px;top:866px">60</div>
<div class="cl mono" style="left:118.5px;top:866px">typedef unsigned short int __u_short;</div>
<div class="ln mono" style="left:0;width:81.5px;top:893px">61</div>
<div class="cl mono" style="left:118.5px;top:893px">typedef unsigned int __u_int;</div>
<div class="ln mono" style="left:0;width:81.5px;top:921px">62</div>
<div class="cl mono" style="left:118.5px;top:921px">typedef unsigned long int __u_long;</div>
<div class="ln mono" style="left:0;width:81.5px;top:949px">63</div>
<div class="ln mono" style="left:0;width:81.5px;top:976px">64</div>
<div class="ln mono" style="left:0;width:81.5px;top:1004px">65</div>
<div class="cl mono" style="left:118.5px;top:1004px">typedef signed char __int8_t;</div>
<div class="ln mono" style="left:0;width:81.5px;top:1032px">66</div>
<div class="cl mono" style="left:118.5px;top:1032px">typedef unsigned char __uint8_t;</div>
<div class="ln mono" style="left:0;width:81.5px;top:1059px">67</div>
<div class="cl mono" style="left:118.5px;top:1059px">typedef signed short int __int16_t;</div>
<div class="ln mono" style="left:0;width:81.5px;top:1087px">68</div>
<div class="cl mono" style="left:118.5px;top:1087px">typedef unsigned short int __uint16_t;</div>
<div class="ln mono" style="left:0;width:81.5px;top:1115px">69</div>
<div class="cl mono" style="left:118.5px;top:1115px">typedef signed int __int32_t;</div>
<div class="ln mono" style="left:0;width:81.5px;top:1143px">70</div>
<div class="cl mono" style="left:118.5px;top:1143px">typedef unsigned int __uint32_t;</div>
<div class="ln mono" style="left:0;width:81.5px;top:1170px">71</div>
<div class="ln mono" style="left:0;width:81.5px;top:1198px">72</div>
<div class="cl mono" style="left:118.5px;top:1198px">typedef signed long int __int64_t;</div>
<div class="ln mono" style="left:0;width:81.5px;top:1226px">73</div>
<div class="cl mono" style="left:118.5px;top:1226px">typedef unsigned long int __uint64_t;</div>
<div class="ln mono" style="left:0;width:81.5px;top:1253px">74</div>
<div class="ln mono" style="left:0;width:81.5px;top:1281px">75</div>
<div class="abs" style="left:119px;top:1289.5px;width:346px;height:9px;background:#464646"></div>
<div class="abs" style="left:837px;top:0;width:6px;height:1298px;background:linear-gradient(90deg,rgba(0,0,0,0),rgba(0,0,0,.45))"></div>
</div>
<div class="abs" id="rmm" style="left:843px;top:47px;width:90px;height:1298px;overflow:hidden">
<div class="abs" style="left:0;top:0;width:76px;height:96px;background:#333"></div>
<div class="abs" style="left:8px;top:0;width:68px;height:1298px;overflow:hidden"><div class="mm mono" style="left:0;top:-1px;color:#d4d4d4;transform:scale(0.08913,0.14286);opacity:.8">
<div># 26 "/usr/include/stdint.h" 3 4</div><div># 1 "/usr/include/x86_64-linux-gnu/bits/libc-header-start.h" 1 3 4</div><div># 33 "/usr/include/x86_64-linux-gnu/bits/libc-header-start.h" 3 4</div><div># 1 "/usr/include/features.h" 1 3 4</div><div># 439 "/usr/include/features.h" 3 4</div><div># 1 "/usr/include/stdc-predef.h" 1 3 4</div><div># 440 "/usr/include/features.h" 2 3 4</div><div># 461 "/usr/include/features.h" 3 4</div><div># 1 "/usr/include/x86_64-linux-gnu/sys/cdefs.h" 1 3 4</div><div># 452 "/usr/include/x86_64-linux-gnu/sys/cdefs.h" 3 4</div><div># 1 "/usr/include/x86_64-linux-gnu/bits/wordsize.h" 1 3 4</div><div># 453 "/usr/include/x86_64-linux-gnu/sys/cdefs.h" 2 3 4</div><div># 1 "/usr/include/x86_64-linux-gnu/bits/long-double.h" 1 3 4</div><div># 454 "/usr/include/x86_64-linux-gnu/sys/cdefs.h" 2 3 4</div><div># 462 "/usr/include/features.h" 2 3 4</div><div># 485 "/usr/include/features.h" 3 4</div><div># 1 "/usr/include/x86_64-linux-gnu/gnu/stubs.h" 1 3 4</div><div># 10 "/usr/include/x86_64-linux-gnu/gnu/stubs.h" 3 4</div><div># 1 "/usr/include/x86_64-linux-gnu/gnu/stubs-64.h" 1 3 4</div><div># 11 "/usr/include/x86_64-linux-gnu/gnu/stubs.h" 2 3 4</div><div># 486 "/usr/include/features.h" 2 3 4</div><div># 34 "/usr/include/x86_64-linux-gnu/bits/libc-header-start.h" 2 3 4</div><div># 27 "/usr/include/stdint.h" 2 3 4</div><div># 1 "/usr/include/x86_64-linux-gnu/bits/types.h" 1 3 4</div><div># 27 "/usr/include/x86_64-linux-gnu/bits/types.h" 3 4</div><div># 1 "/usr/include/x86_64-linux-gnu/bits/wordsize.h" 1 3 4</div><div># 28 "/usr/include/x86_64-linux-gnu/bits/types.h" 2 3 4</div><div># 1 "/usr/include/x86_64-linux-gnu/bits/timesize.h" 1 3 4</div><div># 29 "/usr/include/x86_64-linux-gnu/bits/types.h" 2 3 4</div><div> </div><div> </div><div>typedef unsigned char __u_char;</div><div>typedef unsigned short int __u_short;</div><div>typedef unsigned int __u_int;</div><div>typedef unsigned long int __u_long;</div><div> </div><div> </div><div>typedef signed char __int8_t;</div><div>typedef unsigned char __uint8_t;</div><div>typedef signed short int __int16_t;</div><div>typedef unsigned short int __uint16_t;</div><div>typedef signed int __int32_t;</div><div>typedef unsigned int __uint32_t;</div><div> </div><div>typedef signed long int __int64_t;</div><div>typedef unsigned long int __uint64_t;</div><div> </div><div> </div><div> </div><div> </div><div> </div><div> </div><div>typedef long char unsigned char * l;</div><div>typedef signed short int int __f;</div><div>typedef signed char long __fsword_t;</div><div>typedef unsigned long int __off_;</div><div>typedef signed short int unsigned unsi;</div><div>typedef signed char int const int con;</div><div>typedef unsigned short int int int;</div><div>typedef unsigned short int int __qu;</div><div> </div><div> </div><div> </div><div>typedef unsigned int (;</div><div>typedef signed char unsigned const int;</div><div> </div><div> </div><div> </div><div> </div><div> </div><div> </div><div> </div><div>typedef signed int int un;</div><div>typedef unsigned int char * char * un;</div><div># 522 "/usr/include/x86_64-linux-gnu/bits/wchar.h" 1 3 4</div><div># 135 "/usr/include/x86_64-linux-gnu/bits/struct_ti" 1 3 4</div><div># 393 "/usr/include/x86_64-linux-gnu/bits/typesizes" 1 3 4</div><div># 431 "/usr/include/x86_64-linux-gnu/bits/wchar.h" 1 3 4</div><div># 277 "/usr/include/x86_64-linux-gnu/bits/stdi" 1 3 4</div><div> </div><div> </div><div>typedef unsigned long int int;</div><div>typedef signed short int __attr;</div><div>typedef signed char int unsigned uns;</div><div>typedef long short int char *;</div><div>typedef long long int long long unsi;</div><div>typedef long long int unsigned unsig;</div><div>typedef signed char int __useconds_;</div><div>typedef unsigned int const (vo;</div><div>typedef signed char long int uns;</div><div>typedef long int unsigned __nlink;</div><div>typedef signed char unsigned _;</div><div>typedef signed short int long _;</div><div>typedef signed short int long _;</div><div>typedef signed short int const;</div><div>typedef unsigned int int const;</div><div>typedef unsigned int char * __at;</div><div>typedef unsigned long int __attribu;</div><div> </div><div>typedef unsigned c;</div><div>typedef signed i;</div><div> </div><div> </div><div>typedef signed int (void) _;</div><div> </div><div> </div><div>typedef unsigned int int;</div><div> </div><div> </div><div>typedef signed char char * ch;</div><div> </div><div> </div><div> </div><div> </div><div>typedef long int __blkcnt_t in;</div><div>typedef unsigned long int i;</div><div> </div><div> </div><div>typedef long char __pid_t const unsig;</div><div>typedef unsigned short int char * unsi;</div><div> </div><div> </div><div>typedef signed short int (void) unsi;</div><div>typedef signed long int __attribute;</div><div> </div><div> </div><div>typedef unsigned long i;</div><div> </div><div>typedef signed int int lo;</div><div> </div><div> </div><div>typedef signed char unsigned (;</div><div> </div><div>typedef long char __attribute__ char * int;</div><div> </div><div> </div><div> </div><div>typedef unsigned short int _;</div><div>typedef long short int __at;</div><div> </div><div> </div><div>typedef long int long cha;</div><div> </div><div> </div><div>typedef unsigned short int lo;</div><div> </div><div> </div><div> </div><div> </div><div>typedef unsigned int int __at;</div><div># 203 "/usr/include/x86_64-linux-gnu/bits" 1 3 4</div><div># 487 "/usr/include/x86_64-linux-gnu/bits/stdin" 1 3 4</div><div># 12 "/usr/include/x86_64-linux-gnu/bits/e" 1 3 4</div><div># 38 "/usr/include/x86_64-linux-gnu/bits/time" 1 3 4</div><div># 279 "/usr/include/x86_64-linux-gnu/bits/" 1 3 4</div><div> </div><div> </div><div> </div><div> </div><div># 533 "/usr/include/x86_64-linux-gnu/bits/time64.h" unsig" 1 3 4</div><div># 421 "/usr/include/x86_64-linux-gnu/bits/struct_time" 1 3 4</div><div>typedef signed char __;</div><div>typedef long short int _;</div><div>typedef unsigned int int u;</div><div>typedef unsigned short i;</div><div># 329 "/usr/include/x86_64-l" 1 3 4</div><div> </div><div> </div><div># 17 "/usr/include/x86_64-linux-gnu/bits/stdint-uintn.h" i" 1 3 4</div><div># 452 "/usr/include/x86_64-linux-gnu/bits/stdint-uint" 1 3 4</div><div>typedef signed short int;</div><div>typedef unsigned char;</div><div>typedef long short int;</div><div>typedef unsigned char char;</div><div># 593 "/usr/include/x86_64-" 1 3 4</div><div> </div><div> </div><div> </div><div> </div><div> </div><div>typedef unsigned char const long const;</div><div>typedef long long int long const char *;</div><div>typedef signed int __blkcnt_t (voi;</div><div>typedef long int (void) int int l;</div><div> </div><div> </div><div>typedef long char (void) unsigned;</div><div>typedef signed char char * __attrib;</div><div>typedef unsigned char __fsword_t l;</div><div>typedef unsigned int long __off_t const;</div><div> </div><div> </div><div> </div><div> </div><div> </div><div>typedef long short int ch;</div><div> </div><div> </div><div>typedef signed int cons;</div><div>typedef unsigned char (void);</div><div>typedef signed long int unsi;</div><div>typedef long long int unsigne;</div><div>typedef long long int __attribut;</div><div> </div><div>typedef signed short int unsig;</div><div>typedef unsigned int unsigned int (;</div><div>typedef signed char long (voi;</div><div>typedef long int unsigned __;</div><div>typedef signed int __attribut;</div><div> </div><div> </div><div>typedef long long int int int;</div><div>typedef long char unsigned int l;</div><div>typedef unsigned short int int _;</div><div># 474 "/usr/include/x86_64-linux-gnu/bits/typesizes.h"" 1 3 4</div><div># 100 "/usr/include/x86_64-linux-gnu/bits/stdint-uintn.h" c" 1 3 4</div><div># 528 "/usr/include/x86_64-linux-gnu/bits/stdint-uintn.h" 1 3 4</div><div># 216 "/usr/include/x86_64-linux-gnu/bits/stdint-uintn.h" 1 3 4</div><div># 42 "/usr/include/x86_64-linux-gnu/bits/wchar.h" (vo" 1 3 4</div><div># 369 "/usr/include/x86_64-linux-gnu/bits/stdint-uintn.h" 1 3 4</div><div># 200 "/usr/include/x86_64-linux-gnu/bits/time64.h" __gi" 1 3 4</div><div># 87 "/usr/include/x86_64-linux-gnu/bits/struct_timespe" 1 3 4</div><div>typedef lo;</div><div> </div><div> </div><div> </div><div> </div><div># 599 "/usr/include/x86_64-linux-gnu/bits/stdint-uintn.h" const" 1 3 4</div><div># 120 "/usr/include/x86_64-linux-gnu/bits/time64.h" (void) __" 1 3 4</div><div> </div><div> </div><div> </div><div># 379 "/usr/include/x86_64-linux-gnu/bits/struct_timespec.h"" 1 3 4</div><div># 212 "/usr/include/x86_64-linux-gnu/bits/time64.h" __attrib" 1 3 4</div><div># 481 "/usr/include/x86_64-linux-gnu/bits/typesizes.h" __at" 1 3 4</div><div># 51 "/usr/include/x86_64-linux-gnu/bits/wchar.h" const unsign" 1 3 4</div><div># 416 "/usr/include/x86_64-linux-gnu/bits/time64.h" int char *" 1 3 4</div><div># 219 "/usr/include/x86_64-linux-gnu/bits/typesizes.h" (void)" 1 3 4</div><div># 111 "/usr/include/x86_64-linux-gnu/bits/wchar.h" char *" 1 3 4</div><div> </div><div> </div><div># 517 "/usr/include/x86_64-linux-gnu/bits/types.h" unsigned" 1 3 4</div><div> </div><div> </div><div> </div><div> </div><div># 385 "/usr/include/x86_64-linux-gnu/bits/types.h" const const (" 1 3 4</div><div># 582 "/usr/include/x86_64-linux-gnu/bits/typesizes.h" char * i" 1 3 4</div><div>  int __time (void;</div><div>  long int __key;</div><div>  char __useconds;</div><div>  char __fsword;</div><div>  unsigned int __k;</div><div>  unsigned int __fs;</div><div>  unsigned int _;</div><div>  long int __f;</div><div># 161 "/usr/include/x86_64-linux-gnu/bits/struct_timespe" 1 3 4</div><div> </div><div> </div><div> </div><div> </div><div>typedef long char __attrib;</div><div>  char __dev __at;</div><div>  long int _;</div><div>  char __pid unsi;</div><div>  int __sock;</div><div>  char __ino unsi;</div><div># 118 "/usr/include/x86_64-linux-gnu/bits/typ" 1 3 4</div><div># 428 "/usr/include/x86_64-linux-gnu/bits/end" 1 3 4</div><div># 209 "/usr/include/x86_64-linux-gnu/bits" 1 3 4</div><div>typedef long long int;</div><div>  long int __sy;</div><div>  char __fsword;</div><div>  char __id lo;</div><div>  long int __o;</div><div># 117 "/usr/include/x86_64-linux-gnu/bits/stdi" 1 3 4</div><div># 520 "/usr/include/x86_64-linux-gnu/bits/stdint-" 1 3 4</div><div># 279 "/usr/include/x86_64-linux-gnu/bits/wch" 1 3 4</div><div> </div><div> </div><div> </div><div>typedef signed long i;</div><div>  long int __blkcnt;</div><div>  long int __syscall_sl;</div><div># 63 "/usr/include/x86_64-linux-gnu/bits/" 1 3 4</div><div># 266 "/usr/include/x86_64-linux-gnu/bits/s" 1 3 4</div><div> </div><div> </div><div> </div><div>typedef long i;</div><div> </div><div> </div><div>typedef unsigned short i;</div><div># 89 "/usr/include/x86_64-linux-gnu/bits/time64.h" unsi" 1 3 4</div><div># 383 "/usr/include/x86_64-linux-gnu/bits/endian.h" __attrib" 1 3 4</div><div># 347 "/usr/include/x86_64-linux-gnu/bits/stdint-uintn.h" 1 3 4</div><div>typedef long long;</div><div>typedef unsigned int;</div><div>typedef long long;</div><div>typedef signed sh;</div><div> </div><div> </div><div> </div><div> </div><div>typedef unsigned short i;</div><div> </div><div> </div><div> </div><div> </div><div> </div><div>typedef long;</div><div>  long i;</div><div>  unsigned;</div><div> </div><div> </div><div>  char __rlim in;</div><div>  char __sig_atomic;</div><div>  char __clock __sig_;</div><div>  unsigned int _;</div><div>  int __loff char * _;</div><div>  long int __off _;</div><div>  int __rlim char;</div><div>  unsigned int __sus;</div><div> </div><div> </div><div>  unsigned int __susec;</div><div>  long int __time un;</div><div>  unsigned int __s;</div><div>  int __id (void) (v;</div><div>  long int __caddr __attribute__;</div><div> </div><div>  char __fsblkcnt long int c;</div><div> </div><div>  unsigned int __s;</div><div>  long int _;</div><div>  long int _;</div><div> </div><div> </div><div>  int __ssize (void) const;</div><div>  int __rlim const int int lon;</div><div>  char __off unsigned __;</div><div> </div><div>  char __time __attr;</div><div> </div><div> </div><div> </div><div> </div><div> </div><div> </div><div> </div><div>  unsigned int __sysca;</div><div> </div><div>  char __key int __loff_t _;</div><div>  int __socklen int __suseconds_;</div><div>  unsigned int __loff int (voi;</div><div>  long int __caddr (void) l;</div><div>  long int __time const __pi;</div><div>  unsigned int __caddr const;</div><div>extern void dev (const char * __quad, char * __socklen_t int long unsigne</div><div>typ;</div><div># 521 "/usr/include/x86_6" 1 3 4</div><div> </div><div> </div><div># 190 "/usr/include/x86_64-linux-gnu/bits/stdint-intn.h" long co" 1 3 4</div><div># 562 "/usr/include/x86_64-linux-gnu/bits/endian.h" char * __attri" 1 3 4</div><div>extern size_t intptr (int __key, (void) unsigned (void) const __socklen_</div><div>typedef unsigned int __attribute__ unsigned (void) long long;</div><div> </div><div> </div><div> </div><div> </div><div> </div><div> </div><div>extern long int socklen (void * __ino, const __blkcnt_t long unsigne</div><div>typedef unsigned long int __attribute__ int char * const unsigne;</div><div> </div><div> </div><div> </div><div> </div><div> </div><div> </div><div> </div><div>extern void syscall_slong (int __socklen, char * __nlink_t (void) char</div><div> </div><div> </div><div>extern long int rlim (const char * __time, const int i</div><div> </div><div> </div><div> </div><div> </div><div> </div><div> </div><div>typedef unsigned int (void) char * int char;</div><div>ty;</div><div>  unsigned int __fsfilcnt cha;</div><div>  int __socklen unsigned long (voi;</div><div>  unsigned int __rlim (void) int;</div><div>  long int __nlink int const c;</div><div>  unsigned int __suseconds (void);</div><div>ty;</div><div># 97 "/usr/include/x86_64-l" 1 3 4</div><div> </div><div> </div><div> </div><div> </div><div> </div><div> </div><div>typedef long long int unsigned __;</div><div># 475 "/usr/include/x86_64-linu" 1 3 4</div><div>typedef unsigned i;</div><div> </div><div> </div><div> </div><div> </div><div> </div><div> </div><div> </div><div>typedef unsigned char i;</div><div> </div><div> </div><div> </div><div> </div><div> </div><div> </div><div>typedef signed long int;</div><div> </div><div> </div><div> </div><div> </div><div> </div><div> </div><div>typedef unsigned char __attr;</div><div> </div><div> </div><div> </div><div> </div><div>typedef long int (void) __a;</div><div># 251 "/usr/include/x86_64-linux-gnu/bits/types.h" __at" 1 3 4</div><div># 351 "/usr/include/x86_64-linux-gnu/bits/stdint-i" 1 3 4</div><div># 452 "/usr/include/x86_64-linux-gnu/bits/typesizes.h"" 1 3 4</div><div> </div><div> </div><div> </div><div>typedef signed long;</div><div>typedef signed short;</div><div>typedef unsigned long;</div><div> </div><div> </div><div> </div><div> </div><div> </div><div> </div><div>extern size_t clock (void * __off, long unsigned un</div><div> </div><div>extern int ssize (void * __nlink, int unsigned (void) __attribute__ int</div><div> </div><div> </div><div> </div><div>extern long int pid (const char * __gid, long int const __attribute__ lon</div><div>  int __clock __attribute__ __at;</div><div># 170 "/usr/include/x86_64-" 1 3 4</div><div>extern size_t socklen (int __suseconds, (void) long (void) __fsword_t u</div><div>  char __dev (void) (void) __attribute__ long unsig;</div><div> </div><div> </div><div> </div><div> </div><div> </div><div> </div><div> </div><div> </div><div> </div><div> </div><div>extern long int dev (void * __s</div><div> </div><div> </div><div>extern void time (const char * __fsword, char * (void) (void)</div><div> </div><div> </div><div> </div><div>typedef long char (void) int __at;</div><div> </div><div> </div><div> </div><div>extern long int dev (const char</div><div>extern char * caddr (const char * __fsword, const int int unsigned (v</div><div>extern char * loff (int __blkcnt,</div><div> </div><div> </div><div>extern void uid (void * __syscall_slong, (void) long (v</div><div>extern int uid (int __blkcnt, long char * const const __attribute_</div><div>extern int suseconds (const char * __sig_</div><div>extern char * ino (const char * __loff, unsigned const char * c</div><div> </div><div> </div><div>extern char * nlink (int __clock, __loff_t __attribute__ __attribute_</div><div> </div><div>extern size_t nlink (void * __ssize, unsigned int __attribute__ (voi</div><div> </div><div> </div><div>extern char * useconds (int __mode, const unsigned long unsigned const</div><div> </div><div> </div><div>typedef unsigned long int long unsi;</div><div> </div><div> </div><div>extern int suseconds (int __suseconds, int __blkcnt_t const c</div><div>  int __mode unsigned long __pid_t lo;</div><div> </div><div>extern int key (int __mode, __attribute__ char * __soc</div><div>extern long int blkcnt (void * __syscall_slong, long long (void</div><div>extern char * fsblkcnt (const char * __sockle</div><div>extern long int key (void * __off, char * __p</div><div> </div><div> </div><div>extern size_t suseconds (int __rl</div><div>extern size_t quad (void * __key, (void</div><div>extern char * caddr (const char * __socklen, int long unsigned</div><div>extern void dev (const char * __useconds, __attribute__ const char *</div><div> </div><div> </div><div> </div><div>extern char * loff (void * __sig_atomic, char</div><div>  char __id unsigned __loff_t ch;</div><div> </div><div> </div><div> </div><div>typedef long char __blk;</div><div> </div><div>extern size_t ino (int __time, const (void) __uid_t unsigned const u</div><div>  long int __id __att;</div><div> </div><div> </div><div> </div><div>extern char * fsfilcnt (void * __dev, __attri</div><div> </div><div> </div><div> </div><div>typedef signed char unsi;</div><div> </div><div> </div><div> </div><div>extern void useconds (const char * __off,</div><div>  long int __key (void) char * const;</div><div> </div><div> </div><div> </div><div>extern void key (int __fsblkcnt, (void) __uid_t const const</div><div> </div><div> </div><div> </div><div> </div><div>extern size_t ssize (void * __nlink, int __id_t __at</div><div>  int __quad (void) int __;</div><div> </div><div> </div><div>typedef long int (void) unsigned __;</div><div> </div><div> </div><div>extern void dev (int __clock, (void) long const char * (voi</div><div>  unsigned int __fsblkcnt;</div><div> </div><div> </div><div> </div><div> </div><div>extern char * blkcnt (const char * __off, co</div><div>  long int __ino __dev_t char * __fsfi;</div><div> </div><div> </div><div> </div><div> </div><div>extern int nlink (void * __loff, int __attribute__ const (voi</div><div>  int __key __attribute__ char * c;</div><div> </div><div> </div><div>extern void key (int __id, unsigned int __attribute_</div><div> </div><div> </div><div>extern size_t clock (void * __quad, int int cons</div><div>  unsigned int __key __attribute__;</div><div> </div><div> </div><div>extern long int rlim (const char * __fsfi</div><div>  long int __ssize (void) __attribute__ __id_;</div><div> </div><div> </div><div> </div><div>typedef unsigned int (voi;</div><div> </div><div> </div><div> </div><div>extern int sig_atomic (const char * __suseconds,</div><div>  char __dev long const char * char * long unsig;</div><div> </div><div> </div><div>extern void off (void * __quad, (void) unsigned char * int __</div><div>  int __rlim unsigned;</div><div> </div><div> </div><div> </div><div> </div><div>extern void mode (const char * __fsword, char</div><div> </div><div> </div><div>extern long int caddr (void * __fsblkcnt, unsigne</div><div> </div><div> </div><div>extern size_t caddr (int __uid, int const cha</div><div> </div><div> </div><div> </div><div> </div><div>extern size_t useconds (const char * __dev, c</div><div>  char __pid const __attribute__ __attribu;</div><div> </div><div> </div><div>typedef long char long;</div><div> </div><div> </div><div>extern size_t syscall_slong (const char * __off, lon</div><div> </div><div> </div><div> </div><div>extern long int useconds (const char * __ssize,</div><div>extern char * syscall_slong (int __dev, int unsigned __</div><div> </div><div> </div><div> </div><div> </div><div>extern long int quad (void * __key, __attribute__ const</div><div>extern long int off (const char * __caddr, (void) long (vo</div><div> </div><div> </div><div> </div><div> </div><div>extern void suseconds (int __sig_atomic, const (</div><div>extern void rlim (int __pid, long (vo</div><div>extern long int off (int __key, __attribute__ c</div><div>extern int ino (int __quad, const int long char * unsigned char *</div><div> </div><div>extern size_t time (void * __dev, const unsigned unsigned char *</div><div>  long int __fsblkc;</div><div> </div><div>extern int intptr (void * __clock, char * unsigned _</div><div>extern size_t pid (int __sockl</div><div>extern char * clock (void * __sig_atomic, int (void) (void) _</div><div> </div><div>extern char * caddr (const char * __blkcnt, const</div><div>extern char * id (const char * __pid, __attribute__ int __attribute__</div><div> </div><div> </div><div>extern size_t clock (void * __nlink, __attri</div><div>  unsigned int __id (vo;</div><div> </div><div>extern int time (int __rlim, unsigned long int int __att</div>
</div></div>
<div class="abs" style="left:76px;top:0;width:14px;height:29px;background:#4f4f4f"></div>
</div>
<div class="abs" style="left:0;top:47px;width:933px;height:6px;background:linear-gradient(180deg,rgba(0,0,0,.5),rgba(0,0,0,0))"></div>
<div class="abs" style="left:267px;top:1274px;width:656px;height:62px;background:#252526;box-shadow:0 0 8px rgba(0,0,0,.5)"></div>
<svg class="abs" style="left:280px;top:1291.7px" width="25" height="25" viewBox="0 0 25 25"><circle cx="12.5" cy="12.5" r="10.6" fill="none" stroke="#3794ff" stroke-width="1.7"/><rect x="11.6" y="10.6" width="1.9" height="7.4" fill="#3794ff"/><circle cx="12.5" cy="7.6" r="1.3" fill="#3794ff"/></svg>
<div class="abs" style="left:312px;top:1292px;height:28px;line-height:28px;width:591.5px;overflow:hidden;font-size:19px;color:#ccc;white-space:pre">Generate file using: /home/gcui/maca_package/mxc500-2.31.0.3/opt/...</div>
<div class="abs" style="left:44.7px;top:43.8px;width:879px;height:1291.3px;border:2.3px solid #ff4522;border-radius:5px"></div>
<div class="abs" style="left:270px;top:1277.3px;width:634px;height:47.8px;border:2.3px solid #ff4522;border-radius:4.5px"></div>
</div>
<div class="abs" style="left:1674px;top:-25px;height:34px;line-height:34px;transform:rotate(31deg);transform-origin:0 50%;font-size:30px;letter-spacing:0px;color:rgba(255,255,255,0.15);white-space:pre">10.7.110.178</div>
<div class="abs" style="left:1618.9px;top:-10.8px;height:34px;line-height:34px;transform:rotate(31deg);transform-origin:0 50%;font-size:30px;letter-spacing:0px;color:rgba(255,255,255,0.15);white-space:pre">DI-RSW-24238</div>
<div class="abs" style="left:1598.5px;top:10.3px;height:34px;line-height:34px;transform:rotate(31deg);transform-origin:0 50%;font-size:30px;letter-spacing:1.0px;color:rgba(255,255,255,0.15);white-space:pre">03/12/2025</div>
<div class="abs" style="left:-60.2px;top:899.9px;height:34px;line-height:34px;transform:rotate(31deg);transform-origin:0 50%;font-size:30px;letter-spacing:0px;color:rgba(255,255,255,0.15);white-space:pre">10.7.110.178</div>
<div class="abs" style="left:-115.3px;top:907.2px;height:34px;line-height:34px;transform:rotate(31deg);transform-origin:0 50%;font-size:30px;letter-spacing:0px;color:rgba(255,255,255,0.15);white-space:pre">DI-RSW-24238</div>
</body></html>
